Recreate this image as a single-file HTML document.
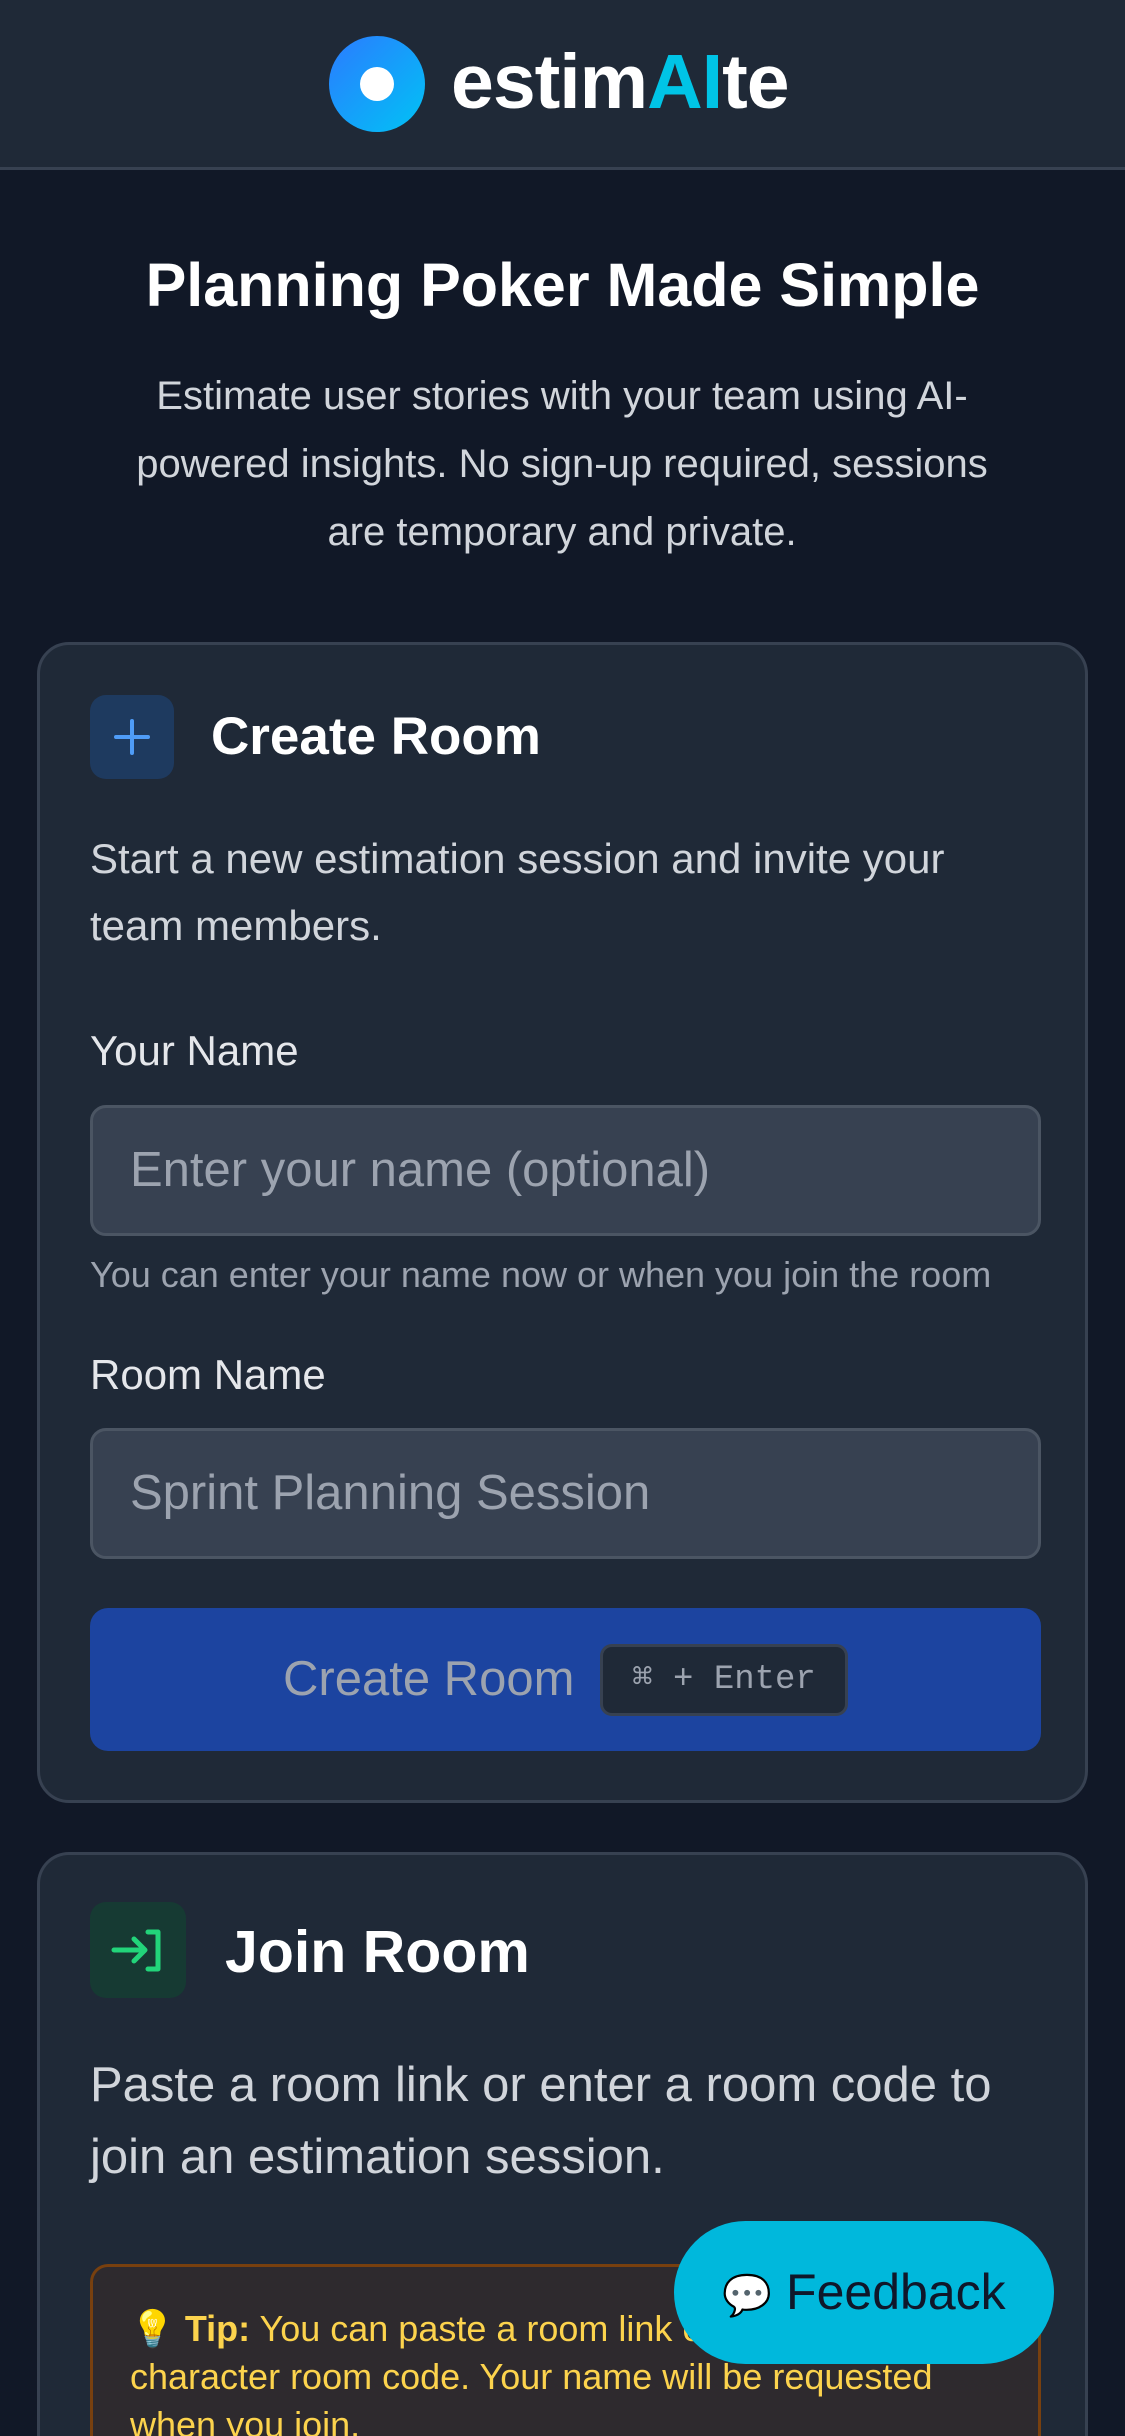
<!DOCTYPE html>
<html><head><meta charset="utf-8"><style>
*{box-sizing:border-box;margin:0;padding:0}
html,body{width:1125px;height:2436px;overflow:hidden}
body{background:#111827;font-family:"Liberation Sans",sans-serif;color:#fff;position:relative}
#w{position:absolute;left:0;top:0;width:1125px;height:2436px;overflow:hidden}
.hdr{height:170px;background:#1f2937;border-bottom:3px solid #374151;position:relative}
.logo{position:absolute;left:329px;top:36px;width:96px;height:96px;border-radius:50%;background:linear-gradient(135deg,#2b7bff,#00c3f5)}
.logo:after{content:"";position:absolute;left:31px;top:31px;width:34px;height:34px;border-radius:50%;background:#fff}
.brand{position:absolute;left:451px;top:37px;font-size:77px;font-weight:bold;letter-spacing:-1px;line-height:90px}
.brand span{color:#00c4e6}
h1{position:absolute;top:248px;width:100%;text-align:center;font-size:61px;font-weight:bold;line-height:74px}
.sub{position:absolute;top:362px;left:112px;width:900px;text-align:center;font-size:40px;line-height:68px;color:#d1d5db}
.card{position:absolute;left:37px;width:1051px;background:#1f2937;border:3px solid #374151;border-radius:32px}
.ib{position:absolute;border-radius:16px}
.t{position:absolute;font-weight:bold;white-space:nowrap}
.p{position:absolute;color:#d1d5db;white-space:nowrap}
.inp{position:absolute;left:50px;width:951px;height:131px;background:#374151;border:3px solid #4b5563;border-radius:16px;color:#9ca3af;font-size:49px;padding-left:37px;line-height:125px}
</style></head><body><div id="w">
<div class="hdr"><div class="logo"></div><div class="brand">estim<span>AI</span>te</div></div>
<h1>Planning Poker Made Simple</h1>
<div class="sub">Estimate user stories with your team using AI-<br>powered insights. No sign-up required, sessions<br>are temporary and private.</div>

<div class="card" style="top:642px;height:1161px">
 <div class="ib" style="left:50px;top:50px;width:84px;height:84px;background:#1e3a5f">
  <svg width="84" height="84" viewBox="0 0 84 84"><path d="M42 26v32M26 42h32" stroke="#4f9cf7" stroke-width="4" stroke-linecap="round"/></svg></div>
 <div class="t" style="left:171px;top:60px;font-size:53px;line-height:64px">Create Room</div>
 <div class="p" style="left:50px;top:180px;font-size:42px;line-height:67px">Start a new estimation session and invite your<br>team members.</div>
 <div class="p" style="left:50px;top:384px;font-size:42px;line-height:44px;color:#e5e7eb">Your Name</div>
 <div class="inp" style="top:460px">Enter your name (optional)</div>
 <div class="p" style="left:50px;top:610px;font-size:36px;line-height:40px;color:#9ca3af">You can enter your name now or when you join the room</div>
 <div class="p" style="left:50px;top:708px;font-size:42px;line-height:44px;color:#e5e7eb">Room Name</div>
 <div class="inp" style="top:783px">Sprint Planning Session</div>
 <div style="position:absolute;left:50px;top:963px;width:951px;height:143px;background:#1c44a0;border-radius:18px">
  <div class="p" style="left:193px;top:43px;font-size:49px;line-height:56px;color:#9ca3af">Create Room</div>
  <div style="position:absolute;left:510px;top:36px;width:248px;height:72px;background:#1f2937;border:3px solid #374151;border-radius:12px;color:#9ca3af;font-family:'Liberation Mono',monospace;font-size:34px;line-height:66px;text-align:center">⌘ + Enter</div>
 </div>
</div>

<div class="card" style="top:1852px;height:584px;border-bottom:none;border-radius:32px 32px 0 0;overflow:hidden">
 <div class="ib" style="left:50px;top:47px;width:96px;height:96px;background:#163a33">
  <svg width="96" height="96" viewBox="0 0 96 96"><path d="M24 48h30M44 37l11 11-11 11M58 30h10v37H58" fill="none" stroke="#22d47a" stroke-width="5" stroke-linecap="round" stroke-linejoin="round"/></svg></div>
 <div class="t" style="left:185px;top:62px;font-size:59px;line-height:70px">Join Room</div>
 <div class="p" style="left:50px;top:194px;font-size:49px;line-height:72px">Paste a room link or enter a room code to<br>join an estimation session.</div>
 <div style="position:absolute;left:50px;top:409px;width:951px;height:175px;background:#2e2a2e;border:3px solid #78400f;border-bottom:none;border-radius:18px 18px 0 0;overflow:hidden">
  <div class="p" style="left:37px;top:38px;font-size:36px;line-height:48px;color:#fcd34d">💡 <b>Tip:</b> You can paste a room link or a 6-<br>character room code. Your name will be requested<br>when you join.</div>
 </div>
</div>

<div style="position:absolute;left:674px;top:2221px;width:380px;height:143px;border-radius:72px;background:#00b8dc;color:#0f172a;font-size:50px;line-height:143px;text-align:center"><span style="font-size:40px">💬</span> Feedback</div>
</div></body></html>
